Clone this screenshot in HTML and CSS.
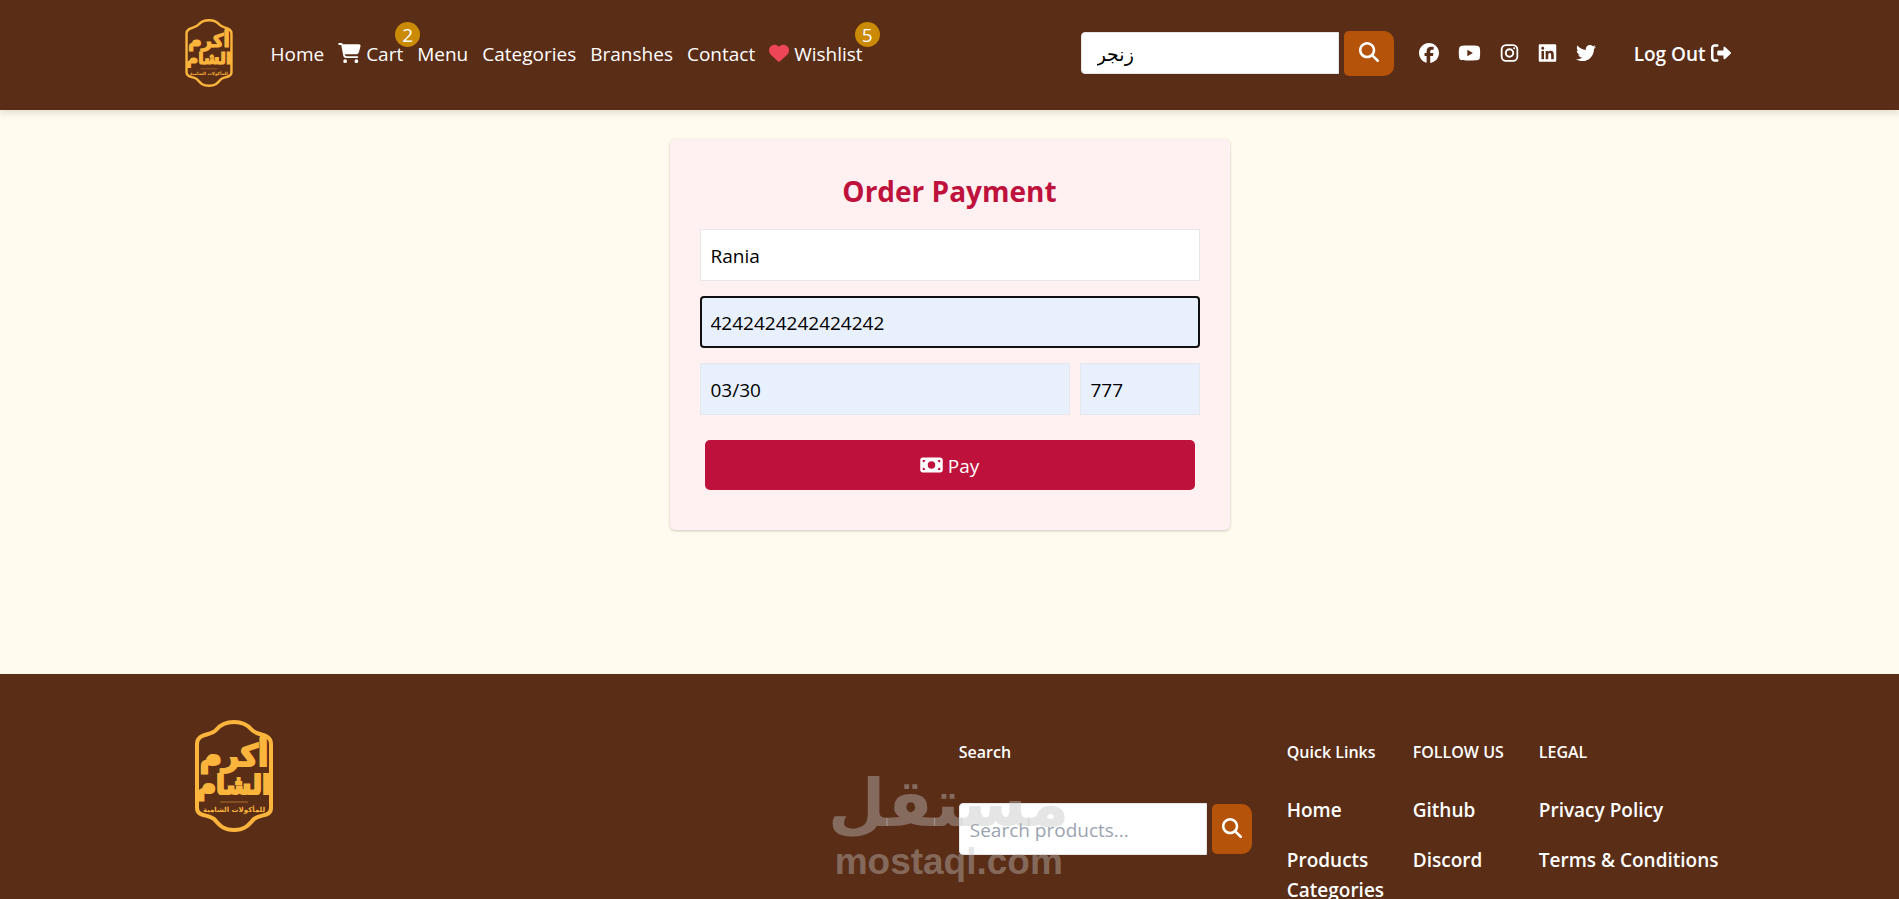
FILE: index.html
```html
<!DOCTYPE html>
<html lang="en">
<head>
  <meta charset="utf-8">
  <title>Order Payment</title>
  <meta name="viewport" content="width=device-width, initial-scale=1">
  <link rel="stylesheet" href="styles.css">
</head>
<body>
  <!-- shared shapes -->
  <svg class="defs" aria-hidden="true">
    <symbol id="logo" viewBox="0 0 78 112">
      <path d="M39 2C48 2 53 5 57 10C62 16 76 13 76 24V88C76 97 65 94 59 99C54 104 51 110 39 110C27 110 24 104 19 99C13 94 2 97 2 88V24C2 13 16 16 21 10C25 5 30 2 39 2Z" fill="none" stroke="#fbb53c" stroke-width="4"/>
      <g fill="#fbb53c" stroke="#fbb53c" text-anchor="middle" font-family="DejaVu Sans" font-weight="bold" direction="rtl">
        <text x="39" y="46" font-size="30" stroke-width="2">أكرم</text>
        <text x="39" y="74" font-size="26" stroke-width="2">الشام</text>
        <text x="39" y="92" font-size="7" stroke="none">للمأكولات الشامية</text>
      </g>
      <path d="M25 82H53" stroke="#fbb53c" stroke-width="1" opacity=".5"/>
    </symbol>
    <symbol id="search" viewBox="0 0 512 512">
      <path d="M416 208c0 45.900-14.900 88.300-40 122.700L502.600 457.400c12.500 12.500 12.500 32.800 0 45.300s-32.800 12.500-45.300 0L330.700 376c-34.400 25.200-76.800 40-122.700 40C93.100 416 0 322.900 0 208S93.100 0 208 0S416 93.100 416 208zM208 352a144 144 0 1 0 0-288 144 144 0 1 0 0 288z"/>
    </symbol>
  </svg>

  <header class="header">
    <div class="container header-inner">
      <a href="#" aria-label="Home page"><svg class="logo"><use href="#logo"/></svg></a>
      <nav class="nav">
        <a href="#">Home</a>
        <a href="#" class="with-badge">
          <svg class="icon cart" viewBox="0 0 576 512"><path d="M0 24C0 10.700 10.700 0 24 0H69.500c22 0 41.500 12.800 50.600 32h411c26.300 0 45.500 25 38.600 50.400l-41 152.300c-8.500 31.400-37 53.300-69.500 53.300H170.700l5.400 28.500c2.200 11.300 12.100 19.500 23.600 19.500H488c13.300 0 24 10.700 24 24s-10.700 24-24 24H199.700c-34.600 0-64.300-24.600-70.700-58.500L77.400 54.500c-.7-3.800-4-6.500-7.900-6.500H24C10.700 48 0 37.300 0 24zM128 464a48 48 0 1 1 96 0 48 48 0 1 1-96 0zm336-48a48 48 0 1 1 0 96 48 48 0 1 1 0-96z"/></svg>
          Cart<span class="badge">2</span>
        </a>
        <a href="#">Menu</a>
        <a href="#">Categories</a>
        <a href="#">Branshes</a>
        <a href="#">Contact</a>
        <a href="#" class="with-badge">
          <svg class="icon heart" viewBox="0 0 512 512"><path d="M47.600 300.400L228.300 469.100c7.500 7 17.400 10.900 27.700 10.900s20.200-3.900 27.700-10.900L464.400 300.400c30.400-28.300 47.600-68 47.600-109.500v-5.800c0-69.900-50.500-129.500-119.400-141C347 36.500 300.600 51.400 268 84L256 96 244 84c-32.600-32.600-79-47.500-124.600-39.900C50.500 55.600 0 115.200 0 185.100v5.800c0 41.500 17.200 81.200 47.600 109.500z"/></svg>
          Wishlist<span class="badge">5</span>
        </a>
      </nav>

      <form class="search header-search">
        <input type="text" value="زنجر" aria-label="Search products">
        <button type="button" aria-label="Search"><svg class="icon"><use href="#search"/></svg></button>
      </form>

      <div class="social">
        <a href="#" aria-label="Facebook"><svg class="icon" viewBox="0 0 512 512"><path d="M512 256C512 114.600 397.400 0 256 0S0 114.600 0 256C0 376 82.700 476.800 194.200 504.500V334.200H141.400V256h52.800V222.300c0-87.100 39.400-127.500 125-127.500c16.200 0 44.200 3.200 55.700 6.400V172c-6-.6-16.500-1-29.600-1c-42 0-58.200 15.900-58.200 57.200V256h83.600l-14.400 78.200H287V510.100C413.800 494.800 512 386.900 512 256z"/></svg></a>
        <a href="#" aria-label="YouTube"><svg class="icon cart" viewBox="0 0 576 512"><path d="M549.700 124.100c-6.300-23.700-24.800-42.300-48.300-48.600C458.800 64 288 64 288 64S117.200 64 74.600 75.500c-23.500 6.300-42 24.900-48.300 48.600-11.400 42.900-11.400 132.300-11.400 132.300s0 89.400 11.400 132.300c6.300 23.700 24.800 41.500 48.300 47.800C117.200 448 288 448 288 448s170.800 0 213.400-11.500c23.500-6.300 42-24.200 48.300-47.800 11.400-42.900 11.400-132.300 11.400-132.300s0-89.400-11.400-132.300zm-317.500 213.500V175.200l142.700 81.200-142.700 81.200z"/></svg></a>
        <a href="#" aria-label="Instagram"><svg class="icon narrow" viewBox="0 0 448 512"><path fill-rule="evenodd" d="M132 32H316A132 132 0 0 1 448 164V348A132 132 0 0 1 316 480H132A132 132 0 0 1 0 348V164A132 132 0 0 1 132 32ZM136 78A90 90 0 0 0 46 168V344A90 90 0 0 0 136 434H312A90 90 0 0 0 402 344V168A90 90 0 0 0 312 78ZM224 136A120 120 0 1 1 224 376A120 120 0 1 1 224 136ZM224 186A70 70 0 1 0 224 326A70 70 0 1 0 224 186ZM344 109A27 27 0 1 1 344 163A27 27 0 1 1 344 109Z"/></svg></a>
        <a href="#" aria-label="LinkedIn"><svg class="icon narrow" viewBox="0 0 448 512"><path d="M416 32H31.900C14.300 32 0 46.500 0 64.300v383.400C0 465.500 14.300 480 31.900 480H416c17.600 0 32-14.500 32-32.300V64.300c0-17.800-14.400-32.300-32-32.300zM135.400 416H69V202.200h66.500V416zm-33.200-243c-21.300 0-38.500-17.300-38.500-38.500S80.900 96 102.200 96c21.200 0 38.500 17.300 38.500 38.500 0 21.300-17.200 38.500-38.500 38.500zm282.100 243h-66.400V312c0-24.800-.5-56.700-34.500-56.700-34.600 0-39.900 27-39.900 54.900V416h-66.400V202.200h63.700v29.200h.9c8.900-16.800 30.600-34.500 62.900-34.500 67.200 0 79.700 44.300 79.700 101.900V416z"/></svg></a>
        <a href="#" aria-label="Twitter"><svg class="icon" viewBox="0 0 512 512"><path d="M459.400 151.700c.3 4.500.3 9.100.3 13.600 0 138.700-105.600 298.600-298.600 298.600-59.500 0-114.700-17.200-161.100-47.100 8.400 1 16.600 1.300 25.300 1.300 49.100 0 94.200-16.600 130.300-44.800-46.100-1-84.800-31.200-98.100-72.800 6.500 1 13 1.600 19.800 1.600 9.400 0 18.800-1.300 27.600-3.600-48.100-9.700-84.100-52-84.100-103v-1.300c14 7.800 30.200 12.700 47.400 13.300-28.300-18.800-46.800-51-46.800-87.400 0-19.500 5.200-37.400 14.300-53 51.700 63.700 129.300 105.300 216.400 109.800-1.600-7.800-2.600-15.900-2.600-24 0-57.800 46.800-104.900 104.900-104.900 30.200 0 57.500 12.700 76.700 33.100 23.700-4.500 46.500-13.300 66.600-25.300-7.800 24.400-24.400 44.800-46.100 57.800 21.100-2.300 41.600-8.100 60.400-16.200-14.300 20.800-32.200 39.300-52.600 54.300z"/></svg></a>
      </div>

      <a href="#" class="logout">Log Out
        <svg class="icon" viewBox="0 0 512 512"><path d="M160 96c17.700 0 32-14.300 32-32s-14.300-32-32-32H96C43 32 0 75 0 128V384c0 53 43 96 96 96h64c17.700 0 32-14.300 32-32s-14.300-32-32-32H96c-17.700 0-32-14.300-32-32V128c0-17.700 14.300-32 32-32h64zM504.500 273.400c4.800-4.500 7.500-10.800 7.500-17.400s-2.700-12.900-7.500-17.400l-144-136c-7-6.600-17.200-8.400-26-4.600s-14.500 12.500-14.500 22v72H192c-17.700 0-32 14.300-32 32v64c0 17.700 14.300 32 32 32H320v72c0 9.600 5.700 18.200 14.500 22s19 2 26-4.600l144-136z"/></svg>
      </a>
    </div>
  </header>

  <main class="main">
    <form class="card">
      <h1>Order Payment</h1>
      <input type="text" value="Rania" aria-label="Name on card">
      <input type="text" class="filled focused" value="4242424242424242" aria-label="Card number">
      <div class="row">
        <input type="text" class="filled" value="03/30" aria-label="Expiry date">
        <input type="text" class="filled" value="777" aria-label="CVC">
      </div>
      <button type="button" class="pay">
        <svg class="icon cart" viewBox="0 0 576 512"><path fill-rule="evenodd" d="M64 64C28.700 64 0 92.700 0 128V384c0 35.300 28.700 64 64 64H512c35.300 0 64-28.700 64-64V128c0-35.300-28.700-64-64-64H64zm64 320H64V320c35.300 0 64 28.700 64 64zM64 192V128h64c0 35.300-28.700 64-64 64zM448 384c0-35.300 28.700-64 64-64v64H448zm64-192c-35.300 0-64-28.700-64-64h64v64zM288 160a96 96 0 1 1 0 192 96 96 0 1 1 0-192z"/></svg>
        Pay
      </button>
    </form>
  </main>

  <footer class="footer">
    <div class="container footer-inner">
      <a href="#" aria-label="Home page"><svg class="footer-logo"><use href="#logo"/></svg></a>
      <div class="footer-find">
        <h2>Search</h2>
        <form class="search footer-search">
          <input type="text" placeholder="Search products..." aria-label="Search products">
          <button type="button" aria-label="Search"><svg class="icon"><use href="#search"/></svg></button>
        </form>
        <div class="watermark"><span lang="ar">مستقل</span><span>mostaql.com</span></div>
      </div>
      <div class="links">
        <div>
          <h2>Quick Links</h2>
          <ul>
            <li><a href="#">Home</a></li>
            <li><a href="#">Products Categories</a></li>
          </ul>
        </div>
        <div>
          <h2>FOLLOW US</h2>
          <ul>
            <li><a href="#">Github</a></li>
            <li><a href="#">Discord</a></li>
          </ul>
        </div>
        <div>
          <h2>LEGAL</h2>
          <ul>
            <li><a href="#">Privacy Policy</a></li>
            <li><a href="#">Terms &amp; Conditions</a></li>
          </ul>
        </div>
      </div>
    </div>
  </footer>
</body>
</html>
```
FILE: styles.css
```css
* {
  box-sizing: border-box;
}

body {
  margin: 0;
  background: #fffbee;
  font-family: "Open Sans", "DejaVu Sans", sans-serif;
  font-size: 19px;
  line-height: 30px;
}

a {
  color: #fff;
  text-decoration: none;
}

input,
button {
  font: inherit;
}

button {
  border: none;
  color: #fff;
  cursor: pointer;
}

.defs {
  position: absolute;
  width: 0;
  height: 0;
}

.container {
  max-width: 1600px;
  margin: 0 auto;
}

.icon {
  width: 20px;
  height: 20px;
  fill: currentColor;
  vertical-align: -2px;
}

.icon.cart {
  width: 23px;
}

.icon.narrow {
  width: 19px;
}

/* Header */
.header {
  position: relative;
  background: #5a2d17;
  box-shadow: 0 4px 6px rgba(0, 0, 0, 0.1);
}

.header-inner {
  display: flex;
  align-items: center;
  height: 110px;
  padding: 0 19px 4px 35px;
}

.logo {
  display: block;
  width: 48px;
  height: 68px;
}

.nav {
  display: flex;
  gap: 14px;
  margin-left: 38px;
  padding-top: 2px;
  white-space: nowrap;
}

.with-badge {
  position: relative;
}

.heart {
  color: #ef4657;
}

.badge {
  position: absolute;
  top: -17px;
  right: -17px;
  width: 25px;
  height: 25px;
  border-radius: 50%;
  background: #ca8a04;
  line-height: 27px;
  text-align: center;
}

.search {
  display: flex;
  align-items: center;
  gap: 5px;
}

.search input {
  min-width: 0;
  border: 1px solid #e5e7eb;
  border-radius: 4px 0 0 4px;
  background: #fff;
}

.search button {
  padding: 0;
  border-radius: 5px 10px 10px 5px;
  background: #b45309;
}

.header-search {
  margin-left: auto;
}

.header-search input {
  width: 258px;
  height: 42px;
  padding: 2px 15px 0;
}

.header-search button {
  width: 50px;
  height: 45px;
}

.social {
  display: flex;
  gap: 19px;
  margin: 0 38px 0 25px;
  padding-top: 2px;
}

.logout {
  padding-top: 2px;
  font-weight: 600;
  white-space: nowrap;
}

/* Payment form */
.main {
  padding: 29px 20px 144px;
}

.card {
  display: flex;
  flex-direction: column;
  gap: 15px;
  max-width: 560px;
  margin: 0 auto;
  padding: 30px 30px 40px;
  border-radius: 5px;
  background: #fff1f2;
  box-shadow: 0 1px 3px rgba(0, 0, 0, 0.2);
}

.card h1 {
  margin: 0;
  color: #be123c;
  font-size: 28px;
  line-height: 45px;
  text-align: center;
}

.card input {
  width: 100%;
  height: 52px;
  padding: 2px 10px 0;
  border: 1px solid #e5e7eb;
  background: #fff;
}

.card .filled {
  background: #e8f0fe;
}

.card .focused {
  border: 2px solid #101010;
  border-radius: 4px;
  padding: 2px 9px 0;
}

.row {
  display: grid;
  grid-template-columns: 37fr 12fr;
  gap: 10px;
}

.pay {
  height: 50px;
  margin: 10px 5px 0;
  padding: 2px 0 0;
  border-radius: 5px;
  background: #be123c;
}

/* Footer */
.footer {
  background: #5a2d17;
}

.footer-inner {
  display: flex;
  padding: 46px 31px 30px 45px;
}

.footer-logo {
  display: block;
  width: 78px;
  height: 112px;
}

.footer h2 {
  margin: 17px 0 0;
  font-size: 16px;
  font-weight: 600;
  line-height: 30px;
  color: #fff;
}

.footer-find {
  position: relative;
  margin-left: auto;
}

.footer-search {
  margin-top: 36px;
}

.footer-search input {
  width: 248px;
  height: 52px;
  padding: 2px 10px 0;
}

.footer-search input::placeholder {
  color: #9ca3af;
}

.footer-search button {
  width: 40px;
  height: 50px;
}

/* lies over the footer search box */
.watermark {
  position: absolute;
  top: 44px;
  left: -125px;
  width: 230px;
  display: flex;
  flex-direction: column;
  align-items: center;
  color: rgba(194, 193, 192, 0.42);
  font: bold 37px/36px "Liberation Sans", sans-serif;
  pointer-events: none;
}

.watermark span:first-child {
  font: bold 66px/80px "DejaVu Sans", sans-serif;
}

.links {
  display: flex;
  gap: 30px;
  margin-left: 35px;
  font-weight: 600;
}

.links div {
  min-width: 96px;
}

.links ul {
  margin: 28px 0 0;
  padding: 0;
  list-style: none;
}

.links li {
  margin-bottom: 20px;
}

.links div:first-child {
  width: 96px;
}
```
